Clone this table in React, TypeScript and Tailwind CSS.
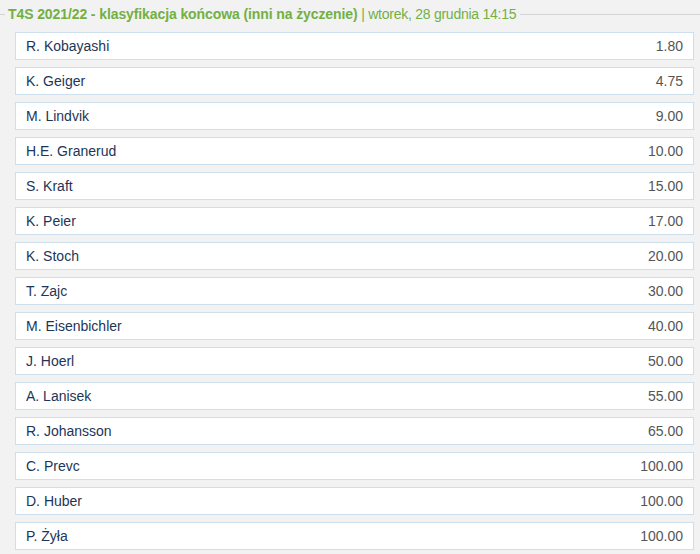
const rows: [string, string][] = [
  ['R. Kobayashi', '1.80'],
  ['K. Geiger', '4.75'],
  ['M. Lindvik', '9.00'],
  ['H.E. Granerud', '10.00'],
  ['S. Kraft', '15.00'],
  ['K. Peier', '17.00'],
  ['K. Stoch', '20.00'],
  ['T. Zajc', '30.00'],
  ['M. Eisenbichler', '40.00'],
  ['J. Hoerl', '50.00'],
  ['A. Lanisek', '55.00'],
  ['R. Johansson', '65.00'],
  ['C. Prevc', '100.00'],
  ['D. Huber', '100.00'],
  ['P. Żyła', '100.00'],
]

export default function App() {
  return (
    <div className="w-[700px] h-[554px] bg-[#f2f2f2] overflow-hidden font-['Liberation_Sans',Arial,sans-serif] text-[14px]">
      <div className="flex items-center h-[28px]">
        <div className="w-[5px] h-px bg-[#d4d4d4]" />
        <div className="ml-[3px] text-[#72b043] whitespace-nowrap">
          <span className="font-bold tracking-[-0.1px]">T4S 2021/22 - klasyfikacja końcowa (inni na życzenie)</span>
          <span className="tracking-[-0.25px]"> | wtorek, 28 grudnia 14:15</span>
        </div>
        <div className="flex-1 ml-[4px] h-px bg-[#d4d4d4]" />
      </div>

      <div className="flex flex-col gap-[7px] mt-[4px] pl-[15px] pr-[6px]">
        {rows.map(([name, odds]) => (
          <div
            key={name}
            className="flex items-center justify-between h-[28px] px-[10px] bg-white border border-[#cddfec]"
          >
            <span className="text-[#1d3557]">{name}</span>
            <span className="text-[#555555]">{odds}</span>
          </div>
        ))}
      </div>
    </div>
  )
}
